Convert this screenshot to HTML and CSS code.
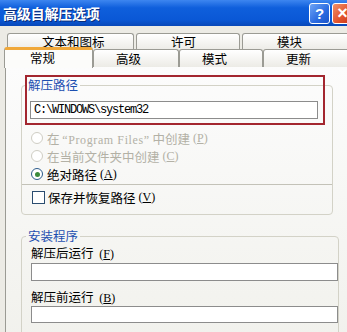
FILE: index.html
```html
<!DOCTYPE html>
<html lang="zh-CN">
	<head>
		<meta charset="utf-8" />
		<title>高级自解压选项</title>
		<link rel="stylesheet" href="styles.css">
	</head>
	<body>
		<div class="window">
			<div class="titlebar">
				<span class="title">高级自解压选项</span>
				<span class="tb-btn help">?</span>
				<span class="tb-btn close">×</span>
			</div>

			<div class="tabs">
				<div class="tab-row back">
					<div class="tab t-text">文本和图标</div>
					<div class="tab t-license">许可</div>
					<div class="tab t-module">模块</div>
				</div>
				<div class="tab-row front">
					<div class="tab t-general selected">常规</div>
					<div class="tab t-advanced">高级</div>
					<div class="tab t-mode">模式</div>
					<div class="tab t-update">更新</div>
				</div>
			</div>

			<div class="panel">
				<fieldset class="group path-group">
					<legend>解压路径</legend>
					<div class="textbox path">C:\WINDOWS\system32</div>
					<div class="options">
						<div class="option disabled">
							<span class="radio"></span>
							<span>在 <span class="latin">“Program Files”</span> 中创建</span>
							<span class="key">(<u>P</u>)</span>
						</div>
						<div class="option disabled">
							<span class="radio"></span>
							<span>在当前文件夹中创建</span>
							<span class="key">(<u>C</u>)</span>
						</div>
						<div class="option">
							<span class="radio checked"></span>
							<span>绝对路径</span>
							<span class="key">(<u>A</u>)</span>
						</div>
					</div>
					<div class="separator"></div>
					<div class="option check-row">
						<span class="checkbox"></span>
						<span>保存并恢复路径</span>
						<span class="key">(<u>V</u>)</span>
					</div>
				</fieldset>

				<fieldset class="group setup-group">
					<legend>安装程序</legend>
					<div class="field-label">解压后运行 <span class="key">(<u>F</u>)</span></div>
					<div class="textbox wide"></div>
					<div class="field-label second">解压前运行 <span class="key">(<u>B</u>)</span></div>
					<div class="textbox wide short"></div>
				</fieldset>

				<div class="highlight"></div>
			</div>
		</div>
	</body>
</html>
```

FILE: styles.css
```css
body {
	margin: 0;
	background: #ecebe5;
	font-family: 'Noto Sans CJK SC', sans-serif;
	font-size: 12px;
	color: #000000;
}

.window {
	position: relative;
	width: 347px;
	height: 332px;
	overflow: hidden;
	background: #ecebe5;
}

/* title bar */

.titlebar {
	display: flex;
	align-items: center;
	height: 26px;
	padding-left: 3px;
	background: linear-gradient(#3d86f0 0%, #0f5fdc 30%, #0a58d6 75%, #0848b8 100%);
}

.title {
	flex: 1;
	color: #ffffff;
	font-size: 14px;
	font-weight: bold;
	letter-spacing: -0.2px;
	text-shadow: 1px 1px 0 #0a2c78;
}

.tb-btn {
	display: flex;
	align-items: center;
	justify-content: center;
	width: 19px;
	height: 19px;
	border: 1px solid #ffffff;
	border-radius: 3px;
	color: #ffffff;
	font-family: 'Liberation Sans', sans-serif;
	font-weight: bold;
	font-size: 15px;
}

.help {
	margin-right: 2px;
	background: linear-gradient(135deg, #6ea4f6, #2a6ae0 60%, #1c54c8);
}

.close {
	margin-right: -6px;
	background: linear-gradient(135deg, #f0906a, #e0502a 60%, #c8381a);
	font-size: 18px;
}

/* tabs */

.tabs {
	padding-top: 7px;
}

.tab-row {
	display: flex;
}

.tab-row.back {
	margin-left: 7px;
	gap: 2px;
	height: 16px;
}

.tab-row.front {
	margin-left: 6px;
	height: 18px;
}

.tab {
	flex: none;
	box-sizing: border-box;
	border: 1px solid #9b9b94;
	border-bottom: none;
	border-radius: 3px 3px 0 0;
	background: linear-gradient(#ffffff, #ecebe6);
	font-size: 12.5px;
	line-height: 16px;
}

.back .tab {
	height: 17px;
	padding-left: 34px;
	line-height: 16px;
}

.t-text {
	width: 127px;
}

.t-license {
	width: 104px;
}

.t-module {
	width: 120px;
}

.front .tab {
	height: 18px;
	padding-left: 22px;
	line-height: 17px;
}

.t-general {
	width: 87px;
}

.t-advanced {
	width: 86px;
}

.t-mode {
	width: 84px;
}

.t-update {
	width: 100px;
}

.front .tab.selected {
	position: relative;
	z-index: 1;
	width: 89px;
	height: 21px;
	margin: -2px 0 -1px -2px;
	padding-left: 25px;
	border-top: 3px solid #f0a83a;
	background: #fcfcfa;
	line-height: 16px;
}

/* panel */

.panel {
	position: relative;
	height: 270px;
	margin-left: 5px;
	border-left: 1px solid #9b9b94;
	background: linear-gradient(#fcfcfc, #f1f1ec);
	padding-top: 10px;
}

.group {
	margin: 0 0 0 15px;
	padding: 0;
	width: 312px;
	box-sizing: border-box;
	border: 1px solid #d3d2c7;
	border-radius: 4px;
}

.group legend {
	margin-left: 4px;
	padding: 0 2px;
	color: #1d4fb0;
	font-size: 12.5px;
	line-height: 16px;
}

.textbox {
	box-sizing: border-box;
	border: 1px solid #8c8c8c;
	background: #ffffff;
}

.path {
	width: 288px;
	height: 18px;
	margin: 8px 0 0 8px;
	padding-left: 3px;
	font-family: 'Liberation Mono', monospace;
	font-size: 12px;
	letter-spacing: -1.2px;
	line-height: 16px;
}

.options {
	margin-top: 10px;
}

.option {
	display: flex;
	align-items: center;
	height: 18px;
	padding-left: 9px;
	white-space: nowrap;
	font-size: 12.5px;
}

.option.disabled {
	color: #b3b1a6;
}

.latin {
	font-family: 'Liberation Serif', serif;
	font-size: 12px;
	letter-spacing: 0.6px;
}

.key {
	margin-left: 3px;
	font-family: 'Liberation Serif', serif;
	font-size: 12px;
}

.radio {
	box-sizing: border-box;
	display: flex;
	align-items: center;
	justify-content: center;
	width: 12px;
	height: 12px;
	margin-right: 4px;
	border: 1px solid #2b5a8a;
	border-radius: 50%;
	background: #ffffff;
}

.disabled .radio {
	border-color: #cfcdc4;
}

.radio.checked::after {
	content: '';
	width: 5px;
	height: 5px;
	border-radius: 50%;
	background: #3b8a3b;
}

.separator {
	height: 1px;
	margin-top: 1px;
	background: #c3c2b8;
}

.check-row {
	height: 16px;
	margin-top: 4px;
	margin-bottom: 9px;
	padding-left: 10px;
}

.checkbox {
	box-sizing: border-box;
	width: 13px;
	height: 13px;
	margin-right: 3px;
	border: 1px solid #2b4d70;
	background: #ffffff;
}

.setup-group {
	margin-top: 13px;
	height: 110px;
}

.field-label {
	height: 16px;
	margin: 1px 0 0 9px;
	font-size: 12.5px;
	line-height: 16px;
}

.field-label.second {
	margin-top: 8px;
}

.wide {
	width: 307px;
	height: 18px;
	margin: 2px 0 0 9px;
}

.wide.short {
	height: 17px;
	margin-top: 1px;
}

/* annotation drawn over the dialog */

.highlight {
	position: absolute;
	left: 19px;
	top: 8px;
	width: 300px;
	height: 50px;
	box-sizing: border-box;
	border: 2px solid #a3262f;
}
```
